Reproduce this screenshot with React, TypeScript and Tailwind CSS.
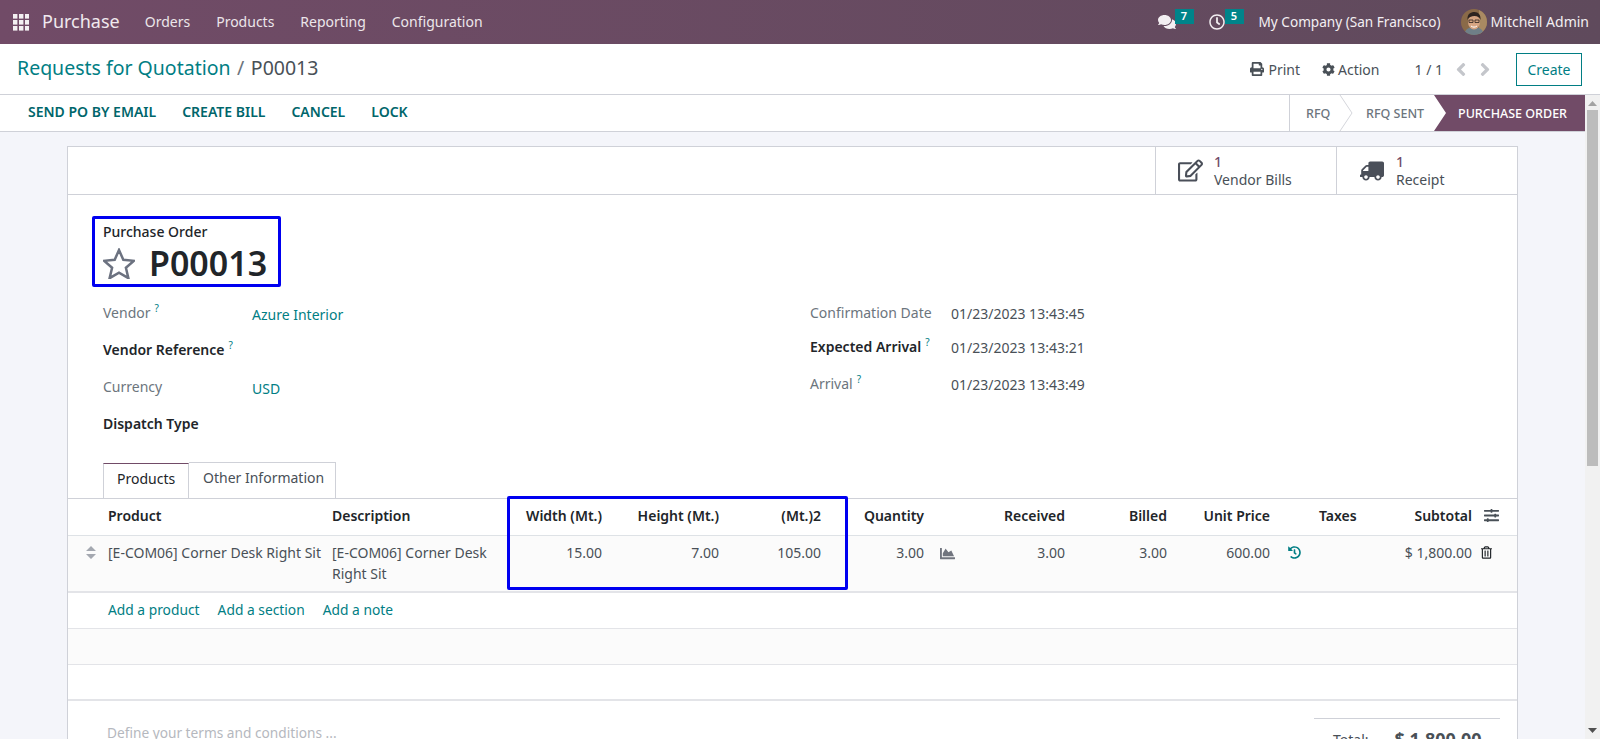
import React from "react";
import { FaComments, FaRegClock, FaPrint, FaCog, FaAngleLeft, FaAngleRight, FaRegEdit, FaTruck, FaChartArea, FaHistory, FaRegTrashAlt, FaSlidersH } from "react-icons/fa";

const Q = () => <sup className="text-[10px] text-[#017e84] ml-[4px] relative top-[-6px] font-normal">?</sup>;

function Field({ label, strong, value, q, h, lw }: { label: string; strong?: boolean; value?: string; q?: boolean; h: string; lw: string }) {
  return (
    <div className={`flex ${h}`}>
      <div className={`${lw} ${strong ? "font-semibold text-[#212529]" : "text-[#6c757d]"}`}>
        {label}{q && <Q />}
      </div>
      {value && <div className={value.startsWith("0") ? "text-[#495057] pt-[1px]" : "text-[#017e84] pt-[2px]"}>{value}</div>}
    </div>
  );
}

const cols = "grid grid-cols-[40px_224px_178px_92px_117px_102px_103px_141px_102px_103px_49px_81px_72px_1fr]";

export default function App() {
  return (
    <div className="h-[739px] w-[1600px] overflow-hidden flex flex-col text-[14px] leading-[21px] text-[#495057] font-['Noto_Sans','Open_Sans',sans-serif]">
      {/* Navbar */}
      <nav className="h-[44px] shrink-0 flex items-center text-white bg-gradient-to-r from-[#714b67] to-[#5f4a5c]">
        <svg width="16" height="17" viewBox="0 0 16 17" className="ml-[13px]" fill="#f3f0f2">
          {[0, 6, 12].map((y) => [0, 6, 12].map((x) => <rect key={`${x}-${y}`} x={x} y={y} width="4.4" height="4.6" />))}
        </svg>
        <span className="ml-[13px] mb-[1px] text-[18px] text-[#f0e9ee]">Purchase</span>
        <div className="ml-[25px] mb-[1px] flex gap-[26px] text-[#ece6ea]">
          <span>Orders</span><span>Products</span><span>Reporting</span><span>Configuration</span>
        </div>
        <div className="ml-auto flex items-center text-[#f3eff2]">
          <div className="relative mr-[33px]">
            <FaComments className="w-[18px] h-[16px]" />
            <span className="absolute left-[17px] top-[-5px] w-[19px] h-[15px] bg-[#00848a] text-white text-[11px] leading-[13px] font-semibold text-center">7</span>
          </div>
          <div className="relative mr-[34px]">
            <FaRegClock className="w-[16px] h-[16px]" />
            <span className="absolute left-[16px] top-[-5px] w-[19px] h-[15px] bg-[#00848a] text-white text-[11px] leading-[13px] font-semibold text-center">5</span>
          </div>
          <span className="mr-[20px] mb-[1px] text-[13.600px]">My Company (San Francisco)</span>
          <svg width="26" height="26" viewBox="0 0 26 26" className="mr-[4px] rounded-full">
            <rect width="26" height="26" fill="#8a6a48" />
            <rect x="18" y="0" width="8" height="26" fill="#a98a62" />
            <path d="M3 26c1-6 5-8 10-8s9 2 10 8z" fill="#6f7f88" />
            <ellipse cx="13" cy="13" rx="6" ry="7.5" fill="#d6a583" />
            <path d="M6.500 11c-.5-6 3-8 7-8s6.500 3 6 8c-1-3-3-4-6-4s-6 1-7 4z" fill="#2e2420" />
            <path d="M8 11h4v2.500H8zM14 11h4v2.500h-4z" fill="none" stroke="#2e2420" strokeWidth=".8" />
            <path d="M10 17c2 1.500 4 1.500 6 0" stroke="#fff" strokeWidth="1" fill="none" />
          </svg>
          <span className="mr-[11px] mb-[1px]">Mitchell Admin</span>
        </div>
      </nav>

      {/* Control panel */}
      <header className="h-[51px] shrink-0 flex items-center bg-white border-b border-[#cfd1d8]">
        <div className="ml-[17px] mb-[4px] text-[19.500px] flex gap-[6.500px]">
          <span className="text-[#017e84]">Requests for Quotation</span>
          <span className="text-[#6c757d]">/</span>
          <span className="text-[#495057]">P00013</span>
        </div>
        <div className="ml-auto flex items-center text-[#495057]">
          <FaPrint className="w-[14px] h-[14px] mr-[4px]" /><span className="mr-[22px]">Print</span>
          <FaCog className="w-[13px] h-[13px] mr-[3px]" /><span className="mr-[35px]">Action</span>
          <span className="mr-[10px]">1 / 1</span>
          <FaAngleLeft className="w-[16px] h-[21px] text-[#c4c6cb] mr-[8px]" />
          <FaAngleRight className="w-[16px] h-[21px] text-[#c4c6cb] mr-[23px]" />
          <button className="w-[66px] h-[33px] mr-[18px] border border-[#017e84] text-[#017e84]">Create</button>
        </div>
      </header>

      <div className="flex-1 flex min-h-0">
        <div className="flex-1 min-w-0 flex flex-col">
          {/* Status bar */}
          <div className="h-[37px] shrink-0 flex items-center bg-white border-b border-[#cfd1d8] font-semibold text-[#017e84]">
            <div className="ml-[28px] mb-[3px] flex gap-[26px] text-[#00666b]">
              <span>SEND PO BY EMAIL</span><span>CREATE BILL</span><span>CANCEL</span><span>LOCK</span>
            </div>
            <div className="ml-auto flex h-full items-stretch text-[12.500px] font-medium text-[#6c757d]">
              <div className="w-[50px] border-l border-[#cfd1d8] pl-[16px] flex items-center">RFQ</div>
              <svg width="14" height="36" viewBox="0 0 14 36" fill="none" stroke="#d4d6db"><path d="M1 0l12 18L1 36" /></svg>
              <div className="w-[81px] pl-[13px] flex items-center">RFQ SENT</div>
              <div className="w-[151px] pl-[24px] flex items-center text-white bg-[#714b67] [clip-path:polygon(0_0,100%_0,100%_100%,0_100%,12px_50%)]">PURCHASE ORDER</div>
            </div>
          </div>

          {/* Form */}
          <main className="flex-1 min-h-0 overflow-hidden bg-[#f4f5fa] pt-[14px] pl-[67px] pr-[67px]">
            <div className="bg-white border border-[#cfd1d8] h-[700px]">
              <div className="h-[48px] flex justify-end border-b border-[#cfd1d8]">
                <div className="w-[181px] border-l border-[#cfd1d8] flex items-center pl-[22px]">
                  <FaRegEdit className="w-[25px] h-[23px] text-[#4a4f59]" />
                  <div className="ml-[11px] leading-[18px]"><div className="text-[#714b67] font-medium">1</div><div>Vendor Bills</div></div>
                </div>
                <div className="w-[181px] border-l border-[#cfd1d8] flex items-center pl-[23px]">
                  <FaTruck className="w-[24px] h-[22px] text-[#4a4f59] scale-x-[-1]" />
                  <div className="ml-[12px] leading-[18px]"><div className="text-[#714b67] font-medium">1</div><div>Receipt</div></div>
                </div>
              </div>

              <div className="relative w-[189px] h-[71px] ml-[24px] mt-[21px] pl-[11px] pt-[5px]">
                <div className="font-medium text-[#212529]">Purchase Order</div>
                <div className="flex items-center mt-[1px]">
                  <svg width="32" height="31" viewBox="0 0 32 31" fill="none" stroke="#6c7280" strokeWidth="2.500">
                    <path d="M16 2l4.300 9.800 10.700 1-8.100 7 2.500 10.400L16 24.700 6.600 30.200l2.500-10.400-8.100-7 10.700-1z" />
                  </svg>
                  <span className="ml-[14px] text-[34px] leading-[40px] font-semibold text-[#212529]">P00013</span>
                </div>
                <div className="absolute inset-0 border-[3px] border-[#0000f0] rounded-[2px]" />
              </div>

              <div className="flex ml-[35px] mt-[15px]">
                <div className="w-[707px]">
                  <Field h="h-[37px]" lw="w-[149px]" label="Vendor" q value="Azure Interior" />
                  <Field h="h-[37px]" lw="w-[149px]" label="Vendor Reference" q strong />
                  <Field h="h-[37px]" lw="w-[149px]" label="Currency" value="USD" />
                  <Field h="h-[37px]" lw="w-[149px]" label="Dispatch Type" strong />
                </div>
                <div>
                  <Field h="h-[34px]" lw="w-[141px]" label="Confirmation Date" value="01/23/2023 13:43:45" />
                  <Field h="h-[37px]" lw="w-[141px]" label="Expected Arrival" q strong value="01/23/2023 13:43:21" />
                  <Field h="h-[36px]" lw="w-[141px]" label="Arrival" q value="01/23/2023 13:43:49" />
                </div>
              </div>

              {/* Tabs */}
              <div className="flex ml-[35px] mt-[12px] h-[36px]">
                <div className="w-[86px] bg-white border border-[#cfd1d8] border-t-[#714b67] border-b-white pl-[13px] pt-[4px] text-[#212529] relative top-[1px]">Products</div>
                <div className="w-[147px] border border-l-0 border-[#cfd1d8] border-b-0 pl-[14px] pt-[4px]">Other Information</div>
              </div>

              {/* Table */}
              <div className="relative border-t border-[#cfd1d8]">
                <div className={`${cols} h-[37px] pb-[3px] items-center font-semibold text-[#212529] border-b border-[#dee2e6]`}>
                  <span /><span>Product</span><span>Description</span>
                  <span className="text-right">Width (Mt.)</span><span className="text-right">Height (Mt.)</span><span className="text-right">(Mt.)2</span>
                  <span className="text-right">Quantity</span><span className="text-right">Received</span><span className="text-right">Billed</span><span className="text-right">Unit Price</span>
                  <span /><span>Taxes</span><span className="text-right">Subtotal</span>
                  <FaSlidersH className="w-[15px] h-[15px] ml-[12px] text-[#495057]" />
                </div>
                <div className={`${cols} h-[57px] pt-[6px] bg-[#fbfbfb] border-b-2 border-[#e3e4e8]`}>
                  <span className="flex justify-end pr-[12px] pt-[4px]">
                    <svg width="10" height="13" viewBox="0 0 10 13" fill="#a4a8b0"><path d="M5 0l5 5H0zM5 13L0 8h10z" /></svg>
                  </span>
                  <span>[E-COM06] Corner Desk Right Sit</span>
                  <span className="pr-[10px]">[E-COM06] Corner Desk Right Sit</span>
                  <span className="text-right">15.00</span><span className="text-right">7.00</span><span className="text-right">105.00</span>
                  <span className="text-right">3.00</span>
                  <span className="flex justify-between">
                    <FaChartArea className="w-[17px] h-[15px] ml-[15px] mt-[4px] text-[#71757f]" /><span>3.00</span>
                  </span>
                  <span className="text-right">3.00</span><span className="text-right">600.00</span>
                  <span className="pl-[18px] pt-[4px]"><FaHistory className="w-[13px] h-[13px] text-[#017e84]" /></span>
                  <span />
                  <span className="text-right whitespace-nowrap -ml-[20px]">$ 1,800.00</span>
                  <FaRegTrashAlt className="w-[11px] h-[13px] ml-[9px] mt-[4px] text-[#212529]" />
                </div>
                <div className="h-[36px] border-b border-[#e3e4e8] pl-[40px] pt-[6px] flex gap-[18px] text-[#017e84] text-[13.800px]">
                  <span>Add a product</span><span>Add a section</span><span>Add a note</span>
                </div>
                <div className="h-[36px] bg-[#fbfbfb] border-b border-[#e3e4e8]" />
                <div className="h-[36px] border-b-2 border-[#e3e4e8]" />
                <div className="absolute left-[439px] top-[-3px] w-[341px] h-[94px] border-[3px] border-[#0000f0] rounded-[2px]" />
              </div>

              {/* Footer */}
              <div className="flex justify-between pl-[39px] pr-[17px] pt-[17px]">
                <span className="text-[#b5b8be] pt-[4px] text-[13.700px]">Define your terms and conditions ...</span>
                <div className="w-[186px] border-t border-[#cfd1d8] pt-[10px] flex">
                  <span className="ml-[19px] text-[#495057]">Total:</span>
                  <span className="ml-[26px] text-[18px] font-bold text-[#495057]">$ 1,800.00</span>
                </div>
              </div>
            </div>
          </main>
        </div>

        {/* Scrollbar */}
        <div className="w-[15px] shrink-0 bg-[#f1f1f1] flex flex-col items-center">
          <svg width="9" height="5" viewBox="0 0 9 5" className="mt-[6px] mb-[4px]" fill="#a3a3a3"><path d="M4.500 0L9 5H0z" /></svg>
          <div className="w-[11px] h-[356px] bg-[#bcbcbc]" />
          <svg width="9" height="5" viewBox="0 0 9 5" className="mt-auto mb-[6px]" fill="#505050"><path d="M4.500 5L9 0H0z" /></svg>
        </div>
      </div>
    </div>
  );
}
